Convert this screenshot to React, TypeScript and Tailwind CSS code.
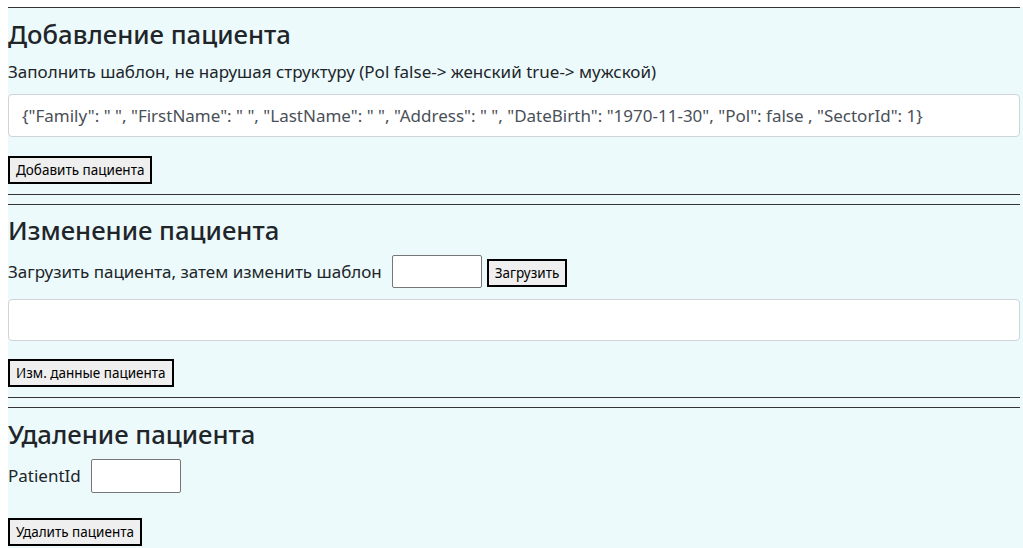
import React from "react";

const font = { fontFamily: '"Noto Sans", "Open Sans", sans-serif' };

function Hr() {
  return <div className="h-px bg-[#353535] mr-[3px]" />;
}

function Btn({ children, className = "" }: { children: React.ReactNode; className?: string }) {
  return (
    <button
      className={
        "border-2 border-black bg-[#efefef] text-black text-[13.5px] px-[6px] leading-[23px] h-[28px] whitespace-nowrap " +
        className
      }
    >
      {children}
    </button>
  );
}

function SmallInput({ className = "" }: { className?: string }) {
  return (
    <div className={"w-[90px] bg-white border border-[#767676] rounded-[2px] " + className} />
  );
}

export default function App() {
  return (
    <div className="bg-white min-h-[548px] pt-[7px] pl-2 text-[#212529]" style={font}>
      <div className="bg-[#ecfafc] pb-[4px]">
        <Hr />
        <div className="flex flex-col items-start mr-[3px]">
          <h4 className="text-[25.7px] leading-[30px] font-medium mt-[12px]">Добавление пациента</h4>
          <p className="text-[17px] leading-[24px] mt-[10px]">
            Заполнить шаблон, не нарушая структуру (Pol false-&gt; женский true-&gt; мужской)
          </p>
          <div className="self-stretch mt-[10px] h-[43px] bg-white border border-[#ced4da] rounded-[4px] pl-[13px] flex items-center text-[17px] text-[#495057]">
            {'{"Family": " ", "FirstName": " ", "LastName": " ", "Address": " ", "DateBirth": "1970-11-30", "Pol": false , "SectorId": 1}'}
          </div>
          <Btn className="mt-[19px] h-[27px]">Добавить пациента</Btn>
        </div>
        <div className="mt-[10px]">
          <Hr />
        </div>
        <div className="mt-[9px]">
          <Hr />
        </div>
        <div className="flex flex-col items-start mr-[3px]">
          <h4 className="text-[25.7px] leading-[30px] font-medium mt-[11px]">Изменение пациента</h4>
          <div className="flex items-center mt-[9px]">
            <span className="text-[17px] leading-[24px]">Загрузить пациента, затем изменить шаблон</span>
            <SmallInput className="h-[33px] ml-[10px]" />
            <Btn className="ml-[5px] mt-[3px]">Загрузить</Btn>
          </div>
          <div className="self-stretch mt-[11px] h-[42px] bg-white border border-[#ced4da] rounded-[4px]" />
          <Btn className="mt-[18px] h-[27px]">Изм. данные пациента</Btn>
        </div>
        <div className="mt-[10px]">
          <Hr />
        </div>
        <div className="mt-[9px]">
          <Hr />
        </div>
        <div className="flex flex-col items-start mr-[3px]">
          <h4 className="text-[25.7px] leading-[30px] font-medium mt-[12px]">Удаление пациента</h4>
          <div className="flex items-center mt-[9px]">
            <span className="text-[17px] leading-[24px] w-[83px]">PatientId</span>
            <SmallInput className="h-[34px]" />
          </div>
          <Btn className="mt-[25px]">Удалить пациента</Btn>
        </div>
      </div>
    </div>
  );
}
